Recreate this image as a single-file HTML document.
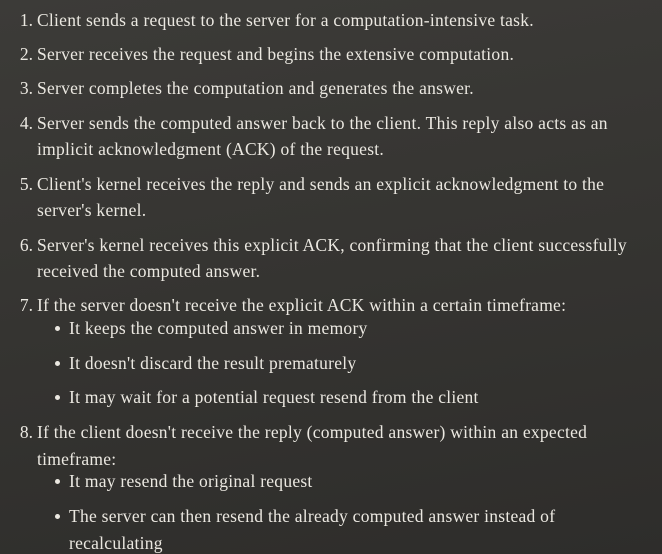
<!DOCTYPE html>
<html><head><meta charset="utf-8"><style>
html,body{margin:0;padding:0}
body{width:662px;height:554px;overflow:hidden;position:relative;
background:linear-gradient(170deg,#3c3b38 0%,#353431 50%,#2e2d2b 100%);
font-family:"Liberation Serif",serif;font-size:17.5px;color:#ebe8e1;}
.l{position:absolute;white-space:nowrap;line-height:22px;letter-spacing:0.26px}
.n{position:absolute;white-space:nowrap;line-height:22px;right:629px;text-align:right}
.b{position:absolute;left:55px;width:5px;height:5px;border-radius:50%;background:#ebe8e1}
</style></head><body>
<div class="n" style="top:9px">1.</div><div class="l" style="left:37px;top:9px">Client sends a request to the server for a computation-intensive task.</div>
<div class="n" style="top:43px">2.</div><div class="l" style="left:37px;top:43px">Server receives the request and begins the extensive computation.</div>
<div class="n" style="top:77px">3.</div><div class="l" style="left:37px;top:77px">Server completes the computation and generates the answer.</div>
<div class="n" style="top:112px">4.</div><div class="l" style="left:37px;top:112px">Server sends the computed answer back to the client. This reply also acts as an</div>
<div class="l" style="left:37px;top:138px">implicit acknowledgment (ACK) of the request.</div>
<div class="n" style="top:173px">5.</div><div class="l" style="left:37px;top:173px">Client's kernel receives the reply and sends an explicit acknowledgment to the</div>
<div class="l" style="left:37px;top:199px">server's kernel.</div>
<div class="n" style="top:234px">6.</div><div class="l" style="left:37px;top:234px">Server's kernel receives this explicit ACK, confirming that the client successfully</div>
<div class="l" style="left:37px;top:260px">received the computed answer.</div>
<div class="n" style="top:294px">7.</div><div class="l" style="left:37px;top:294px">If the server doesn't receive the explicit ACK within a certain timeframe:</div>
<div class="b" style="top:326px"></div><div class="l" style="left:69px;top:317px">It keeps the computed answer in memory</div>
<div class="b" style="top:361px"></div><div class="l" style="left:69px;top:352px">It doesn't discard the result prematurely</div>
<div class="b" style="top:395px"></div><div class="l" style="left:69px;top:386px">It may wait for a potential request resend from the client</div>
<div class="n" style="top:421px">8.</div><div class="l" style="left:37px;top:421px">If the client doesn't receive the reply (computed answer) within an expected</div>
<div class="l" style="left:37px;top:448px">timeframe:</div>
<div class="b" style="top:479px"></div><div class="l" style="left:69px;top:470px">It may resend the original request</div>
<div class="b" style="top:514px"></div><div class="l" style="left:69px;top:505px">The server can then resend the already computed answer instead of</div>
<div class="l" style="left:69px;top:532px">recalculating</div>
</body></html>
